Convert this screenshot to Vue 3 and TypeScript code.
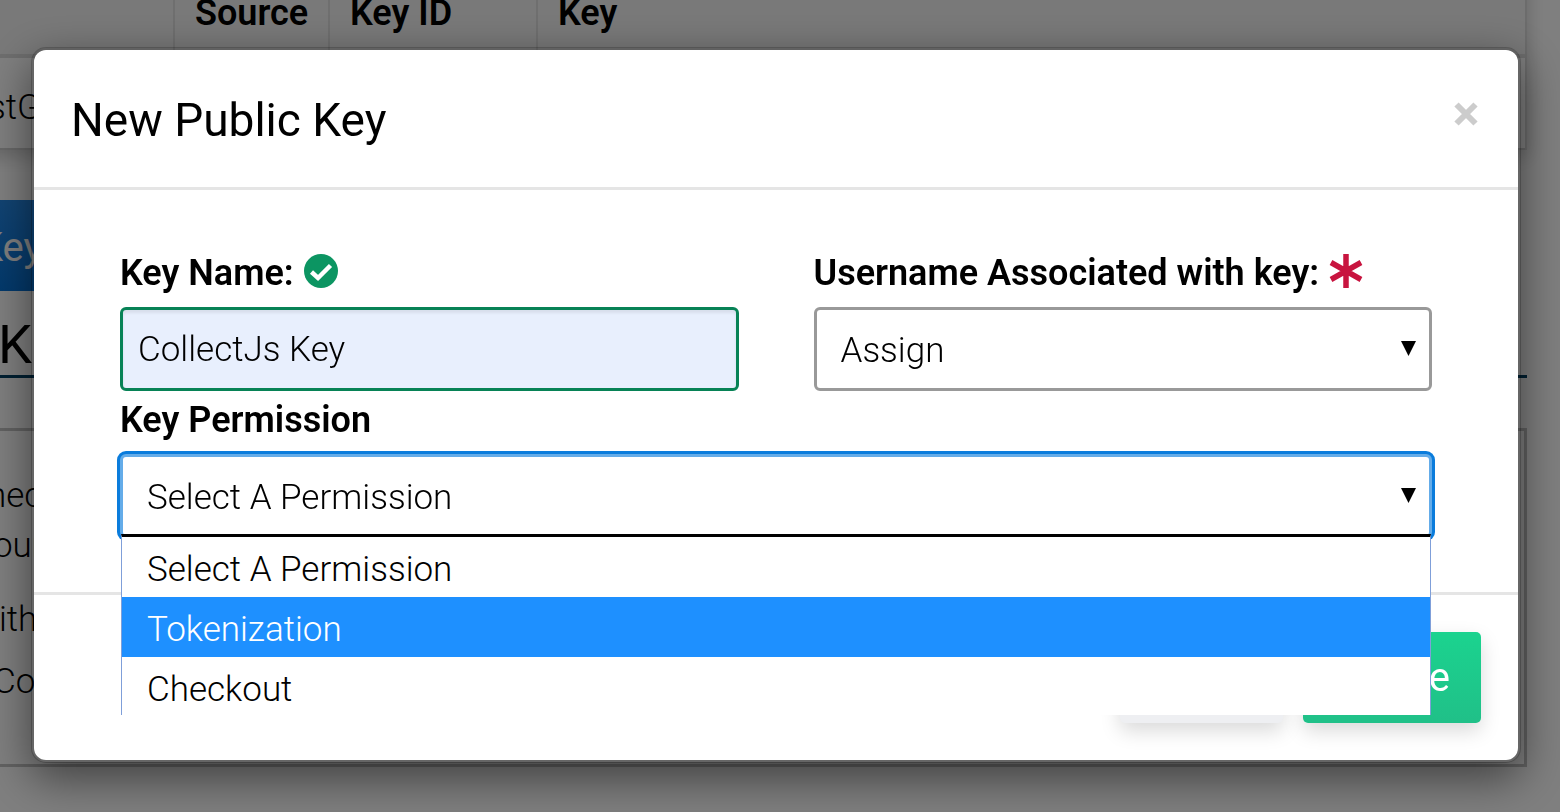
<script setup lang="ts">
import { ref } from 'vue'

const keyName = ref('CollectJs Key')
const username = ref('Assign')
const permission = ref('Select A Permission')
const highlighted = ref('Tokenization')
const permissions = ['Select A Permission', 'Tokenization', 'Checkout']
const notes = ['nec', 'our', 'ith', 'Co']
</script>

<template>
  <main class="page" aria-hidden="true">
    <table class="keys">
      <thead>
        <tr>
          <th class="col-name"></th>
          <th class="col-source">Source</th>
          <th class="col-id">Key ID</th>
          <th>Key</th>
        </tr>
      </thead>
      <tbody>
        <tr>
          <td colspan="4">stG</td>
        </tr>
      </tbody>
    </table>
    <button class="add" type="button">Key</button>
    <h2 class="heading">K</h2>
    <section class="card">
      <p v-for="note in notes" :key="note" class="note">{{ note }}</p>
    </section>
  </main>

  <div class="backdrop">
    <form class="modal" role="dialog" aria-labelledby="modal-title" @submit.prevent>
      <header class="modal-header">
        <h1 id="modal-title">New Public Key</h1>
        <button class="close" type="button" aria-label="Close">
          <svg viewBox="0 0 24 24" width="24" height="24"><path d="M2.500 2.500L21.500 21.500M21.500 2.500L2.500 21.500" stroke="#ccc" stroke-width="6" /></svg>
        </button>
      </header>

      <div class="modal-body">
        <div class="field">
          <label for="key-name">Key Name:
            <svg class="mark" viewBox="0 0 34 34" width="34" height="34">
              <circle cx="17" cy="17" r="17" fill="#0c9562" />
              <path d="M7.500 18L14 24L26.500 11.500" fill="none" stroke="#fff" stroke-width="4.500" />
            </svg>
          </label>
          <input id="key-name" v-model="keyName" class="control valid" type="text" />
        </div>

        <div class="field">
          <label for="username">Username Associated with key:
            <svg class="mark" viewBox="0 0 34 34" width="34" height="34">
              <path d="M17 0V34M2 8.500L32 25.500M32 8.500L2 25.500" stroke="#c8143f" stroke-width="5.500" />
            </svg>
          </label>
          <div class="picker">
            <select id="username" v-model="username" class="control">
              <option>Assign</option>
            </select>
            <svg class="arrow" viewBox="0 0 15 15" width="15" height="15"><path d="M0 0H15L7.500 15Z" /></svg>
          </div>
        </div>

        <div class="field wide">
          <label for="permission">Key Permission</label>
          <div class="picker">
            <select id="permission" v-model="permission" class="control open">
              <option v-for="p in permissions" :key="p">{{ p }}</option>
            </select>
            <svg class="arrow" viewBox="0 0 15 15" width="15" height="15"><path d="M0 0H15L7.500 15Z" /></svg>
            <ul class="menu" role="listbox" aria-label="Key Permission">
              <li
                v-for="p in permissions"
                :key="p"
                role="option"
                :aria-selected="p === highlighted"
                :class="{ active: p === highlighted }"
                @mouseenter="highlighted = p"
                @click="permission = p"
              >{{ p }}</li>
            </ul>
          </div>
        </div>
      </div>

      <footer class="modal-footer">
        <button class="btn" type="button">Close</button>
        <button class="btn primary" type="submit">Create</button>
      </footer>
    </form>
  </div>
</template>

<style>
body {
  margin: 0;
  overflow: hidden;
  background: #fff;
}
</style>

<style scoped>
* {
  box-sizing: border-box;
}

.page,
.backdrop,
button,
input,
select {
  font-family: Roboto, "Liberation Sans", sans-serif;
  font-size: 35px;
  font-weight: 300;
  color: #000;
}

.page {
  margin: -30px 33px 0 -22px;
}

.keys {
  width: 100%;
  table-layout: fixed;
  border-collapse: separate;
  border-spacing: 0;
  border-right: 2px solid #d8d8d8;
  box-shadow: 0 6px 18px rgba(0, 0, 0, 0.2);
}

.keys th {
  height: 88px;
  padding: 2px 20px 0;
  background: #f2f2f2;
  border-bottom: 4px solid #dcdcdc;
  text-align: left;
  font-size: 36px;
  font-weight: 600;
}

.keys th + th {
  border-left: 2px solid #dedede;
}

.keys .col-name {
  width: 195px;
}

.keys .col-source {
  width: 155px;
}

.keys .col-id {
  width: 208px;
}

.keys td {
  height: 92px;
  padding: 8px 0 0 10px;
  background: #fff;
  border-bottom: 2px solid #d0d0d0;
}

.add {
  display: block;
  width: 160px;
  height: 91px;
  margin: 50px 0 0;
  padding: 4px 0 0;
  border: 0;
  background: linear-gradient(#2488e6, #0673d8);
  color: #fff;
  text-align: left;
  font-size: 40px;
  font-weight: 400;
}

.heading {
  height: 87px;
  margin: 0;
  padding: 22px 0 0 20px;
  border-bottom: 3px solid #004064;
  font-size: 54px;
  line-height: 64px;
  font-weight: 400;
}

.card {
  height: 339px;
  margin-top: 50px;
  padding: 40px 0 0 12px;
  border: 3px solid #c4c4c4;
}

.note {
  margin: 0 0 12px;
  line-height: 50px;
}

.note:first-child {
  margin-bottom: 0;
  text-indent: -6px;
}

.note:nth-child(2) {
  margin-bottom: 24px;
}

.note:nth-child(3) {
  text-indent: 6px;
}

.backdrop {
  position: fixed;
  inset: 0;
  padding: 47px 39px 0 31px;
  background: rgba(0, 0, 0, 0.5);
}

.modal {
  border: 3px solid rgba(0, 0, 0, 0.2);
  border-radius: 15px;
  background: #fff;
  background-clip: padding-box;
  box-shadow: 0 15px 45px rgba(0, 0, 0, 0.5);
}

.modal-header {
  display: flex;
  justify-content: space-between;
  align-items: flex-start;
  padding: 37px 37px 34px;
  border-bottom: 3px solid #e5e5e5;
}

.modal-header h1 {
  margin: 0;
  font-size: 46px;
  line-height: 66px;
  font-weight: 400;
}

.close {
  display: flex;
  margin-top: 15px;
  padding: 0 3px;
  border: 0;
  background: none;
}

.modal-body {
  display: grid;
  grid-template-columns: 1fr 1fr;
  gap: 6px 75px;
  padding: 60px 86px 54px;
}

.wide {
  grid-column: 1 / -1;
}

label {
  display: flex;
  align-items: center;
  gap: 10px;
  height: 46px;
  margin-bottom: 11px;
  font-size: 36px;
  font-weight: 600;
  white-space: nowrap;
}

.mark {
  flex: none;
  margin-bottom: 4px;
}

.control {
  display: block;
  width: 100%;
  height: 84px;
  margin: 0;
  border: 3px solid #999;
  border-radius: 6px;
  background: #fff;
  outline: none;
  appearance: none;
}

select.control {
  padding: 3px 48px 0 24px;
}

.valid {
  padding: 0 15px;
  border-color: #078256;
  background: #e8effd;
  box-shadow: inset 0 3px 3px rgba(0, 0, 0, 0.07);
}

.open {
  border-color: #64ace9;
  box-shadow: 0 0 0 3px #0a7cdc;
}

.picker {
  position: relative;
}

.arrow {
  position: absolute;
  top: 34px;
  right: 16px;
  pointer-events: none;
}

.menu {
  position: absolute;
  top: 80px;
  left: 1px;
  right: 1px;
  z-index: 1;
  margin: 0;
  padding: 0;
  border: 1px solid #7f9fd9;
  border-width: 3px 1px 0;
  border-top-color: #000;
  background: #fff;
  list-style: none;
}

.menu li {
  height: 60px;
  padding-left: 25px;
  line-height: 66px;
}

.menu li:last-child {
  height: 58px;
}

.menu .active {
  background: #1e90ff;
  color: #fff;
}

.modal-footer {
  display: flex;
  justify-content: flex-end;
  gap: 20px;
  padding: 37px;
  border-top: 3px solid #e5e5e5;
}

.btn {
  height: 91px;
  min-width: 160px;
  padding: 0 31px;
  border: 0;
  border-radius: 5px;
  background: #eeeff2;
  box-shadow: 0 8px 20px rgba(0, 0, 0, 0.15);
  font-size: 40px;
  font-weight: 400;
}

.primary {
  background: linear-gradient(#1bd38f, #20c088);
  color: #fff;
}
</style>
